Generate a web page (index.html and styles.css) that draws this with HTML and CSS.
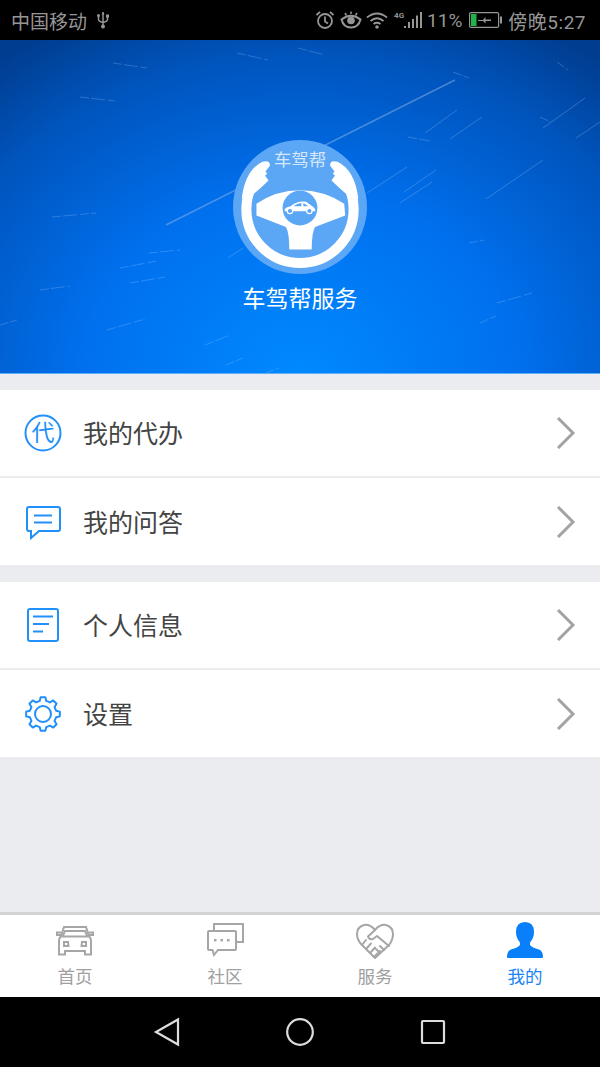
FILE: index.html
```html
<!DOCTYPE html>
<html lang="zh-CN">
  <head>
    <meta charset="UTF-8" />
    <title>车驾帮服务</title>
    <meta name="viewport" content="width=device-width, initial-scale=1.0" />
    <link rel="stylesheet" href="styles.css">
  </head>
  <body>
    <div class="phone">
      <header class="status-bar">
        <span class="carrier">中国移动</span>
        <svg class="usb" viewBox="0 0 12 18" width="12" height="18">
          <path d="M6 1v16M1.5 5v3.5q0 2 4.5 3q4.5-1 4.5-3V6" fill="none" stroke="#969696" stroke-width="1.5"/>
          <circle cx="6" cy="15.5" r="2" fill="#969696"/>
          <path d="M4.5 3.5L6 1l1.5 2.5z" fill="#969696"/>
          <circle cx="1.5" cy="4.5" r="1.5" fill="#969696"/>
          <rect x="9" y="3.5" width="3" height="3" fill="#969696"/>
        </svg>
        <div class="status-right">
          <svg class="st-alarm" viewBox="0 0 20 20" width="20" height="20">
            <circle cx="10" cy="11" r="7" fill="none" stroke="#969696" stroke-width="1.8"/>
            <path d="M10 6.5V11.5L13 13.5M1.5 5L5 1.8M18.5 5L15 1.8" fill="none" stroke="#969696" stroke-width="1.8"/>
          </svg>
          <svg class="st-eye" viewBox="0 0 22 20" width="22" height="20">
            <path d="M1.5 9.5Q11 2 20.5 9.5Q18.5 17.5 11 17.5Q3.5 17.5 1.5 9.5z" fill="none" stroke="#969696" stroke-width="2"/>
            <circle cx="11" cy="10.5" r="3.8" fill="#969696"/>
            <path d="M5 3L6.5 5.5M11 1.5V4M17 3L15.5 5.5" stroke="#969696" stroke-width="1.5"/>
          </svg>
          <svg class="st-wifi" viewBox="0 0 22 18" width="22" height="18">
            <path d="M1 6.5Q11 -1.5 21 6.5M4.5 10Q11 4.5 17.5 10M7.5 13Q11 10.5 14.5 13" fill="none" stroke="#969696" stroke-width="1.8"/>
            <circle cx="11" cy="16" r="1.8" fill="#969696"/>
          </svg>
          <span class="st-net">4G</span>
          <svg class="st-signal" viewBox="0 0 20 18" width="20" height="18">
            <path d="M1 15h2v2H1zM5 11h2v6H5zM9 8h2v9H9zM13 4.5h2V17h-2zM17 1h2v16h-2z" fill="#969696"/>
          </svg>
          <span class="st-percent">11%</span>
          <svg class="st-battery" viewBox="0 0 33 16" width="33" height="16">
            <rect x="0.6" y="0.6" width="29" height="14.8" rx="1.5" fill="none" stroke="#969696" stroke-width="1.2"/>
            <rect x="2" y="2" width="5.5" height="12" fill="#22b14c"/>
            <rect x="31" y="4.5" width="2" height="7" fill="#969696"/>
            <path d="M9 8h5l2.5-3v2.5h5.5v1.5h-5.500v2.500l-2.500-2.500h-5z" fill="#969696"/>
          </svg>
          <span class="st-time">傍晚5:27</span>
        </div>
      </header>

      <section class="hero">
        <svg class="streaks" viewBox="0 0 600 333" width="600" height="333">
          <g class="streak-long">
            <path d="M166 185L455 40"/>
          </g>
          <g class="streak-mid">
            <path d="M543 88L585 58M486 159L543 120M425 93L457 70M450 99L482 77M576 98L600 82M367 153L407 127M404 152L436 130M400 163L432 142M228 218L243 208"/>
          </g>
          <g class="streak-dots">
            <path d="M237 13L268 20M113 23L147 28M80 57L115 61M453 32L469 38M408 97L430 101M540 77L551 82M557 22L568 30M298 8L325 15M0 285L17 280M107 290L145 279M120 228L157 221M149 213L180 210M52 177L96 173M130 243L165 237M480 283L496 276M497 263L532 253M226 325L243 318M266 333L279 328M469 203L484 200M40 250L70 246M205 305L230 295"/>
          </g>
        </svg>
        <svg class="logo" viewBox="100 45 400 400" width="134" height="134">
          <circle cx="300" cy="245" r="200" fill="#5ca6f6"/>
          <path d="M192 134A160 160 0 1 0 408 134" fill="none" stroke="#fff" stroke-width="30"/>
          <path d="M126 220Q136 135 188 110Q212 104 210 122L192 146L206 166Q182 190 155 212z" fill="#fff"/>
          <path d="M474 220Q464 135 412 110Q388 104 390 122L408 146L394 166Q418 190 445 212z" fill="#fff"/>
          <path d="M170 235Q230 195 300 195Q370 195 432 235L435 270L345 305Q335 320 335 372H268Q268 320 258 305L170 270z" fill="#fff"/>
          <circle cx="300" cy="248" r="52" fill="#5ca6f6"/>
          <path d="M254 258Q252 246 272 243Q288 227 318 229L340 245Q348 252 346 258H254z" fill="#fff"/>
          <path d="M280 243Q292 234 304 233V243zM310 233L325 243H310z" fill="#5ca6f6"/>
          <circle cx="270" cy="257" r="8" fill="#5ca6f6" stroke="#fff" stroke-width="3.5"/>
          <circle cx="328" cy="257" r="8" fill="#5ca6f6" stroke="#fff" stroke-width="3.5"/>
          <text class="logo-text" x="300" y="124" text-anchor="middle">车驾帮</text>
        </svg>
        <h1 class="hero-title">车驾帮服务</h1>
      </section>

      <main class="content">
        <ul class="group">
          <li class="row">
            <svg class="row-icon" viewBox="0 0 38 38" width="38" height="38">
              <circle cx="19" cy="19" r="17.5" fill="none" stroke="#2290fa" stroke-width="2"/>
              <text class="dai" x="19" y="27" text-anchor="middle">代</text>
            </svg>
            <span class="row-label">我的代办</span>
            <svg class="chevron" viewBox="0 0 20 32" width="20" height="32"><path d="M2 1L17 16L2 31" /></svg>
          </li>
          <li class="row">
            <svg class="row-icon" viewBox="0 0 38 38" width="38" height="38">
              <path d="M5 4H34Q36 4 36 6V26Q36 28 34 28H15L7 35V28H5Q3 28 3 26V6Q3 4 5 4z" fill="none" stroke="#2290fa" stroke-width="2"/>
              <path d="M10 12.5H28M10 19.5H28" stroke="#2290fa" stroke-width="2"/>
            </svg>
            <span class="row-label">我的问答</span>
            <svg class="chevron" viewBox="0 0 20 32" width="20" height="32"><path d="M2 1L17 16L2 31" /></svg>
          </li>
        </ul>
        <ul class="group">
          <li class="row">
            <svg class="row-icon" viewBox="0 0 38 38" width="38" height="38">
              <rect x="4" y="3" width="30" height="32" rx="2" fill="none" stroke="#2290fa" stroke-width="2"/>
              <path d="M9 10.5H29M9 18H25M9 25.5H19" stroke="#2290fa" stroke-width="2"/>
            </svg>
            <span class="row-label">个人信息</span>
            <svg class="chevron" viewBox="0 0 20 32" width="20" height="32"><path d="M2 1L17 16L2 31" /></svg>
          </li>
          <li class="row">
            <svg class="row-icon" viewBox="0 0 38 38" width="38" height="38">
              <path d="M15.73 5.9L16.63 2.17H21.37L22.27 5.9L25.95 7.43L29.23 5.42L32.58 8.77L30.57 12.05L32.1 15.73L35.83 16.63V21.37L32.1 22.27L30.57 25.95L32.58 29.23L29.23 32.58L25.95 30.57L22.27 32.1L21.37 35.83H16.63L15.73 32.1L12.05 30.57L8.77 32.58L5.42 29.23L7.43 25.95L5.9 22.27L2.17 21.37V16.63L5.9 15.73L7.43 12.05L5.42 8.77L8.77 5.42L12.05 7.43z" fill="none" stroke="#2290fa" stroke-width="2" stroke-linejoin="round"/>
              <circle cx="19" cy="19" r="8" fill="none" stroke="#2290fa" stroke-width="2"/>
            </svg>
            <span class="row-label">设置</span>
            <svg class="chevron" viewBox="0 0 20 32" width="20" height="32"><path d="M2 1L17 16L2 31" /></svg>
          </li>
        </ul>
      </main>

      <nav class="tabs">
        <div class="tab">
          <svg class="tab-icon" viewBox="0 0 38 38" width="38" height="38">
            <g fill="none" stroke="#a6a6a6" stroke-width="2">
              <path d="M3 33.5V20Q3 17 5 15L8 6H30L33 15Q35 17 35 20V33.5H29V30H9V33.5z"/>
              <path d="M5 14H1V11.5H5M33 14H37V11.5H33M9 10H29L31.5 15.5H6.5z"/>
              <path d="M8 21H12L12.5 25H8zM30 21H26L25.5 25H30z"/>
            </g>
          </svg>
          <span class="tab-label">首页</span>
        </div>
        <div class="tab">
          <svg class="tab-icon" viewBox="0 0 38 38" width="38" height="38">
            <g fill="none" stroke="#a6a6a6" stroke-width="2">
              <path d="M3 10H29Q30 10 30 11V28Q30 29 29 29H12L8 34L6.5 29H3Q2 29 2 28V11Q2 10 3 10z"/>
              <path d="M8 9V3H37V21H31"/>
            </g>
            <path d="M8 18h2.5v2.5H8zM14.5 18h2.5v2.5h-2.5zM21 18h2.5v2.5H21z" fill="#a6a6a6"/>
          </svg>
          <span class="tab-label">社区</span>
        </div>
        <div class="tab">
          <svg class="tab-icon" viewBox="0 0 38 38" width="38" height="38">
            <g fill="none" stroke="#a6a6a6" stroke-width="2" stroke-linejoin="round" stroke-linecap="round">
              <path d="M19 9Q14 3 8 4Q1 6 1 13Q1 19 6 24L19 37L33 24Q37 19 37 13Q37 6 30 4Q24 3 19 9z"/>
              <path d="M19 9L12 15.5Q13 19 17 18L21 15L33 25"/>
              <path d="M6 24L10 19M11 27L15 22.5M15 31L19 26.5M19 35L24 30M28 29L24 25M24 32L20 28"/>
            </g>
          </svg>
          <span class="tab-label">服务</span>
        </div>
        <div class="tab tab-active">
          <svg class="tab-icon" viewBox="0 0 38 38" width="38" height="38">
            <path d="M19 1Q28 1 28 11Q28 17 24 21.5V24Q26 26.5 33 28.5Q37 30 37 36Q37 37 36 37H2Q1 37 1 36Q1 30 5 28.5Q12 26.5 14 24V21.5Q10 17 10 11Q10 1 19 1z" fill="#0a7ffa"/>
          </svg>
          <span class="tab-label">我的</span>
        </div>
      </nav>

      <footer class="nav-bar">
        <svg viewBox="0 0 28 30" width="28" height="30"><path d="M25 2.5V27.5L3 15z" /></svg>
        <svg viewBox="0 0 30 30" width="30" height="30"><circle cx="15" cy="15" r="12.8" /></svg>
        <svg viewBox="0 0 28 28" width="28" height="28"><rect x="3" y="3" width="22" height="22" rx="1" /></svg>
      </footer>
    </div>
  </body>
</html>
```

FILE: styles.css
```css
* {
  box-sizing: border-box;
}

html,
body {
  margin: 0;
  padding: 0;
}

body {
  font-family: "Noto Sans CJK SC", "Liberation Sans", sans-serif;
  background-color: #ebecf0;
}

.phone {
  width: 600px;
  height: 1067px;
  display: flex;
  flex-direction: column;
  overflow: hidden;
}

.status-bar {
  height: 40px;
  background-color: #000;
  color: #969696;
  display: flex;
  align-items: center;
  padding: 0 14px 0 11px;
}

.carrier {
  font-size: 19px;
}

.usb {
  margin-left: 10px;
}

.status-right {
  margin-left: auto;
  display: flex;
  align-items: center;
}

.st-eye {
  margin-left: 5px;
}

.st-wifi {
  margin-left: 4px;
}

.st-net {
  font-family: "Roboto", sans-serif;
  font-size: 8px;
  font-weight: 700;
  width: 9px;
  margin: -10px 0 0 6px;
}

.st-percent {
  font-family: "Roboto", sans-serif;
  font-size: 19px;
  margin-left: 4px;
}

.st-battery {
  margin-left: 7px;
}

.st-time {
  font-family: "Roboto", "Noto Sans CJK SC", sans-serif;
  font-size: 19px;
  letter-spacing: 0.5px;
  margin-left: 6px;
}

.hero {
  position: relative;
  height: 334px;
  padding-top: 100px;
  border-bottom: 1px solid #5cb0fb;
  background: radial-gradient(ellipse 480px 400px at 50% 100%, #0089ff 0%, #0070ee 45%, #0054bc 80%, #003d90 100%);
  display: flex;
  flex-direction: column;
  align-items: center;
}

.streaks {
  position: absolute;
  top: 0;
  left: 0;
  fill: none;
}

.streak-long {
  stroke: #9fc0e8;
  stroke-width: 1.5;
  opacity: 0.45;
}

.streak-mid {
  stroke: #9fc8f5;
  stroke-width: 1;
  opacity: 0.3;
}

.streak-dots {
  stroke: #cfe4ff;
  stroke-width: 1;
  stroke-dasharray: 9 2 14 3;
  opacity: 0.22;
}

.logo {
  position: relative;
  display: block;
}

.logo-text {
  font-size: 52px;
  fill: #d5e7fb;
}

.hero-title {
  position: relative;
  margin: 7px 0 0;
  font-size: 23px;
  line-height: 32px;
  font-weight: 400;
  color: #fff;
}

.content {
  flex: 1;
  padding-top: 16px;
}

.group {
  list-style: none;
  margin: 0 0 17px;
  padding: 0;
  background-color: #fff;
}

.row {
  height: 88px;
  display: flex;
  align-items: center;
  padding: 0 24px 0 24px;
  border-bottom: 2px solid #ebecee;
}

.row:last-child {
  height: 87px;
  border-bottom: none;
}

.row-label {
  margin: 0 0 2px 21px;
  font-size: 25px;
  color: #444;
}

.chevron {
  margin-left: auto;
  fill: none;
  stroke: #a3a3a3;
  stroke-width: 3;
}

.row-icon {
  flex-shrink: 0;
}

.dai {
  font-size: 23px;
  fill: #2290fa;
}

.tabs {
  height: 85px;
  display: flex;
  background-color: #fff;
  border-top: 3px solid #d3d3d6;
}

.tab {
  width: 150px;
  display: flex;
  flex-direction: column;
  align-items: center;
  padding-top: 6px;
  color: #a0a0a0;
}

.tab-active {
  color: #1a84f4;
}

.tab-label {
  font-size: 17.5px;
  line-height: 26px;
  margin-top: 4px;
}

.tab-icon {
  display: block;
}

.nav-bar {
  height: 70px;
  background-color: #000;
  display: flex;
  align-items: center;
  justify-content: space-between;
  padding: 0 153px;
}

.nav-bar svg {
  fill: none;
  stroke: #dcdcdc;
  stroke-width: 2.2;
}
```
